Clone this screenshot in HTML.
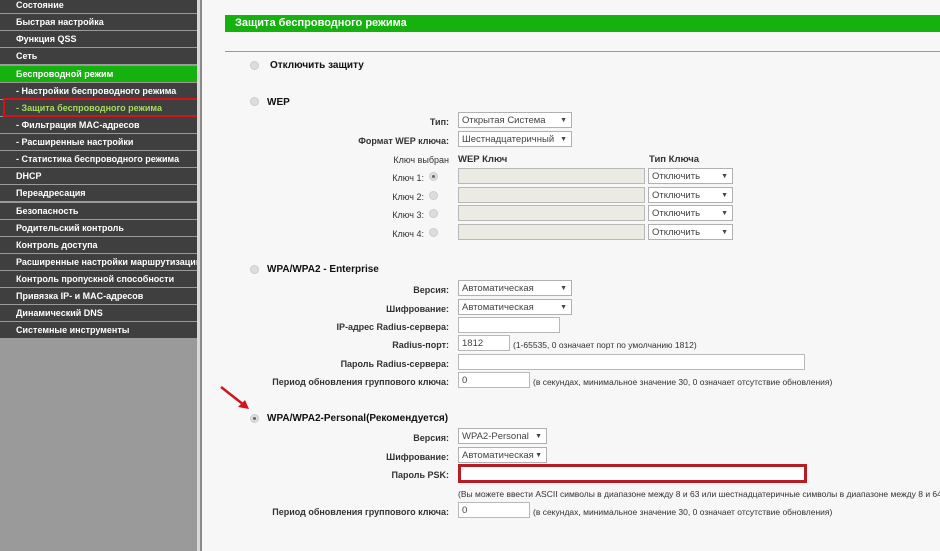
<!DOCTYPE html>
<html><head><meta charset="utf-8"><style>
*{margin:0;padding:0;box-sizing:border-box}
body{width:940px;height:551px;overflow:hidden;background:#f7f7f7;font-family:"Liberation Sans",Arial,sans-serif;position:relative}
.sb{position:absolute;left:0;top:0;width:197px;height:551px;background:#9a9a9a}
.sb div{position:absolute;left:0;width:197px;height:16px;background:#3f3f3f;color:#fff;font-size:9px;font-weight:bold;line-height:17px;padding-left:16px;white-space:nowrap}
.sb div.g{background:#15b20f}
.sb div.s{color:#a6de5a}
.vl1{position:absolute;left:197px;top:0;width:3px;height:551px;background:#d8d8d8}
.vl2{position:absolute;left:200px;top:0;width:2px;height:551px;background:#8a8a8a}
.t{position:absolute;font-size:9px;color:#333;line-height:12px;white-space:nowrap;margin-top:2px}
.r{text-align:right}
.b{font-weight:bold;font-size:10px;color:#111}
.lb{font-weight:bold;color:#333}
.in{position:absolute;height:16px;background:#fff;border:1px solid #b8b8b8;font-size:9.5px;color:#444;line-height:16px;padding-left:3px}
.sel{position:absolute;height:16px;background:#fff;border:1px solid #b0b0b0;font-size:9.5px;color:#444;line-height:16px;padding-left:3px}
.sel:after{content:"▼";position:absolute;right:4px;top:0;font-size:7px}
.dis{background:#ebebe4}
.rad{position:absolute;width:9px;height:9px;border-radius:50%;background:#ddd;border:1px solid #ccc}
.rad.on:after{content:"";position:absolute;left:2px;top:2px;width:3px;height:3px;border-radius:50%;background:#666}
</style></head><body>
<div class="sb">
<div style="top:-3px">Состояние</div>
<div style="top:14px">Быстрая настройка</div>
<div style="top:31px">Функция QSS</div>
<div style="top:48px">Сеть</div>
<div class="g" style="top:66px">Беспроводной режим</div>
<div style="top:83px">- Настройки беспроводного режима</div>
<div class="s" style="top:100px">- Защита беспроводного режима</div>
<div style="top:117px">- Фильтрация MAC-адресов</div>
<div style="top:134px">- Расширенные настройки</div>
<div style="top:151px">- Статистика беспроводного режима</div>
<div style="top:168px">DHCP</div>
<div style="top:185px">Переадресация</div>
<div style="top:203px">Безопасность</div>
<div style="top:220px">Родительский контроль</div>
<div style="top:237px">Контроль доступа</div>
<div style="top:254px">Расширенные настройки маршрутизации</div>
<div style="top:271px">Контроль пропускной способности</div>
<div style="top:288px">Привязка IP- и MAC-адресов</div>
<div style="top:305px">Динамический DNS</div>
<div style="top:322px">Системные инструменты</div>
</div>
<div style="position:absolute;left:3px;top:98px;width:198px;height:19px;border:2px solid #d0141c"></div>
<div class="vl1"></div><div class="vl2"></div>

<div style="position:absolute;left:225px;top:15px;width:715px;height:17px;background:#15b20f;color:#fff;font-size:11px;font-weight:bold;line-height:17px;padding-left:10px">Защита беспроводного режима</div>
<div style="position:absolute;left:225px;top:51px;width:715px;height:1px;background:#999"></div>

<div class="rad" style="left:250px;top:61px"></div><div class="t b" style="left:270px;top:58px">Отключить защиту</div>
<div class="rad" style="left:250px;top:97px"></div><div class="t b" style="left:267px;top:95px">WEP</div>

<div class="t r lb" style="right:491px;top:114px">Тип:</div>
<div class="sel" style="left:458px;top:112px;width:114px">Открытая Система</div>
<div class="t r lb" style="right:491px;top:133px">Формат WEP ключа:</div>
<div class="sel" style="left:458px;top:131px;width:114px">Шестнадцатеричный</div>
<div class="t r" style="right:491px;top:152px">Ключ выбран</div>
<div class="t lb" style="left:458px;top:152px;font-size:9.5px">WEP Ключ</div>
<div class="t lb" style="left:649px;top:152px;font-size:9.5px">Тип Ключа</div>

<div class="t r" style="right:516px;top:170px">Ключ 1:</div><div class="rad on" style="left:429px;top:172px"></div>
<div class="in dis" style="left:458px;top:168px;width:187px"></div><div class="sel" style="left:648px;top:168px;width:85px">Отключить</div>
<div class="t r" style="right:516px;top:189px">Ключ 2:</div><div class="rad" style="left:429px;top:191px"></div>
<div class="in dis" style="left:458px;top:187px;width:187px"></div><div class="sel" style="left:648px;top:187px;width:85px">Отключить</div>
<div class="t r" style="right:516px;top:207px">Ключ 3:</div><div class="rad" style="left:429px;top:209px"></div>
<div class="in dis" style="left:458px;top:205px;width:187px"></div><div class="sel" style="left:648px;top:205px;width:85px">Отключить</div>
<div class="t r" style="right:516px;top:226px">Ключ 4:</div><div class="rad" style="left:429px;top:228px"></div>
<div class="in dis" style="left:458px;top:224px;width:187px"></div><div class="sel" style="left:648px;top:224px;width:85px">Отключить</div>

<div class="rad" style="left:250px;top:265px"></div><div class="t b" style="left:267px;top:262px">WPA/WPA2 - Enterprise</div>
<div class="t r lb" style="right:491px;top:282px">Версия:</div><div class="sel" style="left:458px;top:280px;width:114px">Автоматическая</div>
<div class="t r lb" style="right:491px;top:301px">Шифрование:</div><div class="sel" style="left:458px;top:299px;width:114px">Автоматическая</div>
<div class="t r lb" style="right:491px;top:319px">IP-адрес Radius-сервера:</div><div class="in" style="left:458px;top:317px;width:102px"></div>
<div class="t r lb" style="right:491px;top:337px">Radius-порт:</div><div class="in" style="left:458px;top:335px;width:52px">1812</div>
<div class="t" style="left:513px;top:337px;font-size:8.5px">(1-65535, 0 означает порт по умолчанию 1812)</div>
<div class="t r lb" style="right:491px;top:356px">Пароль Radius-сервера:</div><div class="in" style="left:458px;top:354px;width:347px"></div>
<div class="t r lb" style="right:491px;top:374px">Период обновления группового ключа:</div><div class="in" style="left:458px;top:372px;width:72px">0</div>
<div class="t" style="left:533px;top:374px;font-size:8.5px">(в секундах, минимальное значение 30, 0 означает отсутствие обновления)</div>

<svg style="position:absolute;left:218px;top:384px" width="36" height="30"><line x1="3" y1="3" x2="26" y2="21" stroke="#d0141c" stroke-width="2.5"/><polygon points="31,25 20,23 27,16" fill="#d0141c"/></svg>

<div class="rad on" style="left:250px;top:414px"></div><div class="t b" style="left:267px;top:411px">WPA/WPA2-Personal(Рекомендуется)</div>
<div class="t r lb" style="right:491px;top:430px">Версия:</div><div class="sel" style="left:458px;top:428px;width:89px">WPA2-Personal</div>
<div class="t r lb" style="right:491px;top:449px">Шифрование:</div><div class="sel" style="left:458px;top:447px;width:89px">Автоматическая</div>
<div class="t r lb" style="right:491px;top:467px">Пароль PSK:</div>
<div class="in" style="left:458px;top:464px;width:349px;height:19px;border:3px solid #b81c22"></div>
<div class="t" style="left:458px;top:486px;font-size:8.5px">(Вы можете ввести ASCII символы в диапазоне между 8 и 63 или шестнадцатеричные символы в диапазоне между 8 и 64.)</div>
<div class="t r lb" style="right:491px;top:504px">Период обновления группового ключа:</div><div class="in" style="left:458px;top:502px;width:72px">0</div>
<div class="t" style="left:533px;top:504px;font-size:8.5px">(в секундах, минимальное значение 30, 0 означает отсутствие обновления)</div>
</body></html>
